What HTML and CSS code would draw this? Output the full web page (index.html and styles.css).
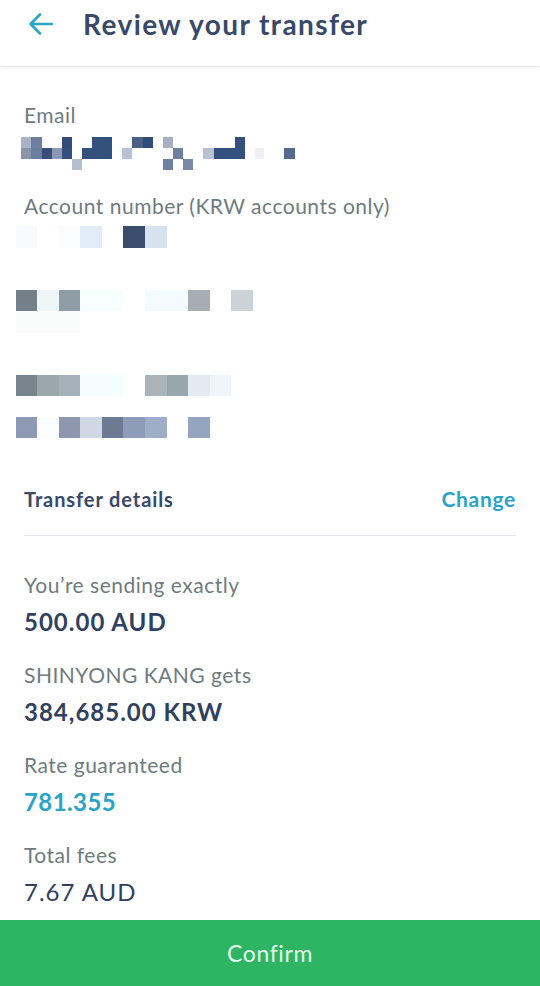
FILE: index.html
```html
<!DOCTYPE html>
<html lang="en">

<head>
    <meta charset="UTF-8">
    <meta name="viewport" content="width=device-width, initial-scale=1.0">
    <title>Review your transfer</title>
    <link rel="stylesheet" href="styles.css">
</head>

<body>
    <header class="topbar">
        <svg class="back" width="26" height="24" viewBox="0 0 26 24">
            <path d="M24 12 H3 M12 2.5 L2.5 12 L12 21.5" fill="none" stroke="#2aa5c9" stroke-width="2.6" stroke-linecap="round" stroke-linejoin="round" />
        </svg>
        <h1 class="title">Review your transfer</h1>
    </header>

    <main class="review">
        <section class="recipient">
            <p class="label">Email</p>
            <!-- blurred email -->
            <svg class="redacted redacted-email" width="300" height="33" viewBox="0 0 300 33">
                <rect x="21" y="0" width="10" height="11" fill="#a9b3c6" />
                <rect x="31" y="0" width="11" height="11" fill="#6f7fa0" />
                <rect x="62" y="0" width="10" height="11" fill="#344d7a" />
                <rect x="92" y="0" width="20" height="11" fill="#34507d" />
                <rect x="132" y="0" width="11" height="11" fill="#4a5f85" />
                <rect x="143" y="0" width="10" height="11" fill="#2f4b7a" />
                <rect x="163" y="0" width="10" height="11" fill="#a8b0c0" />
                <rect x="235" y="0" width="10" height="11" fill="#34507e" />

                <rect x="21" y="11" width="10" height="11" fill="#8893ac" />
                <rect x="31" y="11" width="11" height="11" fill="#6b7da0" />
                <rect x="42" y="11" width="10" height="11" fill="#3a4f78" />
                <rect x="52" y="11" width="10" height="11" fill="#8a98b5" />
                <rect x="62" y="11" width="10" height="11" fill="#34507e" />
                <rect x="82" y="11" width="30" height="11" fill="#34507d" />
                <rect x="122" y="11" width="10" height="11" fill="#b8c2d2" />
                <rect x="173" y="11" width="10" height="11" fill="#6d80a0" />
                <rect x="203" y="11" width="11" height="11" fill="#b7c1d2" />
                <rect x="214" y="11" width="31" height="11" fill="#34507e" />
                <rect x="255" y="11" width="9" height="11" fill="#eef0f5" />
                <rect x="284" y="11" width="11" height="11" fill="#55698f" />

                <rect x="72" y="22" width="10" height="11" fill="#b4bfd0" />
                <rect x="163" y="22" width="10" height="11" fill="#6f80a0" />
                <rect x="183" y="22" width="10" height="11" fill="#7a89a6" />
            </svg>

            <p class="label label-account">Account number (KRW accounts only)</p>
            <!-- blurred bank details -->
            <svg class="redacted redacted-account" width="300" height="212" viewBox="0 0 300 212">
                <rect x="16" y="0" width="21" height="22" fill="#f8fbfe" />
                <rect x="58" y="0" width="22" height="22" fill="#fafcfe" />
                <rect x="80" y="0" width="22" height="22" fill="#e2ebf8" />
                <rect x="123" y="0" width="22" height="22" fill="#3b4d6d" />
                <rect x="145" y="0" width="22" height="22" fill="#d8e1ee" />

                <rect x="16" y="64" width="21" height="21" fill="#748089" />
                <rect x="37" y="64" width="22" height="21" fill="#eef6fa" />
                <rect x="59" y="64" width="21" height="21" fill="#8f9ea6" />
                <rect x="80" y="64" width="43" height="21" fill="#f6feff" />
                <rect x="145" y="64" width="43" height="21" fill="#f4fbfd" />
                <rect x="188" y="64" width="22" height="21" fill="#a6adb3" />
                <rect x="231" y="64" width="22" height="21" fill="#ccd3d7" />
                <rect x="16" y="85" width="64" height="22" fill="#fafcfc" />

                <rect x="16" y="149" width="21" height="21" fill="#77848b" />
                <rect x="37" y="149" width="22" height="21" fill="#9ba7ad" />
                <rect x="59" y="149" width="21" height="21" fill="#a4b1b8" />
                <rect x="80" y="149" width="43" height="21" fill="#f5feff" />
                <rect x="145" y="149" width="22" height="21" fill="#aab4b9" />
                <rect x="167" y="149" width="21" height="21" fill="#98a6ad" />
                <rect x="188" y="149" width="22" height="21" fill="#e3eaf1" />
                <rect x="210" y="149" width="21" height="21" fill="#eff6fa" />

                <rect x="16" y="191" width="21" height="21" fill="#8d99b5" />
                <rect x="37" y="191" width="22" height="21" fill="#fcfdff" />
                <rect x="59" y="191" width="21" height="21" fill="#8d98ae" />
                <rect x="80" y="191" width="22" height="21" fill="#cfd8e4" />
                <rect x="102" y="191" width="21" height="21" fill="#6e7a91" />
                <rect x="123" y="191" width="22" height="21" fill="#8e9cba" />
                <rect x="145" y="191" width="22" height="21" fill="#9eaec8" />
                <rect x="188" y="191" width="22" height="21" fill="#95a4c1" />
            </svg>
        </section>

        <section class="details">
            <div class="details-head">
                <h2 class="details-title">Transfer details</h2>
                <a class="change" href="#">Change</a>
            </div>

            <dl class="summary">
                <dt class="label">You’re sending exactly</dt>
                <dd class="value">500.00 AUD</dd>

                <dt class="label">SHINYONG KANG gets</dt>
                <dd class="value">384,685.00 KRW</dd>

                <dt class="label">Rate guaranteed</dt>
                <dd class="value value-rate">781.355</dd>

                <dt class="label">Total fees</dt>
                <dd class="value value-plain">7.67 AUD</dd>
            </dl>
        </section>
    </main>

    <button class="confirm">Confirm</button>
</body>

</html>
```

FILE: styles.css
```css
* {
    margin: 0;
    padding: 0;
    box-sizing: border-box;
}

body {
    width: 540px;
    height: 986px;
    display: flex;
    flex-direction: column;
    overflow: hidden;
    background: #fff;
    font-family: Lato, "Noto Sans", sans-serif;
    color: #2f405e;
}

.topbar {
    height: 66px;
    display: flex;
    align-items: flex-start;
    padding: 6px 0 0 28px;
    background: #fff;
    box-shadow: 0 1px 3px rgba(0, 0, 0, 0.12);
    position: relative;
    z-index: 1;
}

.back {
    margin-top: 6px;
    flex: none;
}

.title {
    margin-left: 29px;
    font-size: 28px;
    line-height: 36px;
    font-weight: 700;
    color: #38496a;
    letter-spacing: 1.4px;
}

.review {
    flex: 1;
    padding: 37px 24px 0;
}

.label {
    display: block;
    font-size: 21px;
    line-height: 24px;
    color: #6e7b80;
    letter-spacing: 0.5px;
}

.redacted {
    display: block;
    margin-left: -24px;
}

.redacted-email {
    margin-top: 10px;
}

.label-account {
    margin-top: 24px;
}

.redacted-account {
    margin-top: 8px;
}

.details {
    margin-top: 49px;
}

.details-head {
    display: flex;
    justify-content: space-between;
    align-items: baseline;
    padding-bottom: 24px;
    border-bottom: 1px solid #e3e7e9;
}

.details-title {
    font-size: 20px;
    line-height: 24px;
    font-weight: 700;
    color: #38496a;
    letter-spacing: 0.9px;
}

.change {
    font-size: 21px;
    line-height: 24px;
    font-weight: 700;
    color: #2aa3c6;
    text-decoration: none;
    letter-spacing: 0.7px;
}

.summary {
    padding-top: 37px;
}

.value {
    margin: 11px 0 27px;
    font-size: 24px;
    line-height: 28px;
    font-weight: 700;
    color: #30415f;
    letter-spacing: 1px;
}

.value-rate {
    color: #2aa3c6;
    letter-spacing: 0.4px;
}

.value-plain {
    font-weight: 400;
    margin-bottom: 0;
}

.confirm {
    height: 66px;
    flex: none;
    border: none;
    background: #2db564;
    color: #e3fbec;
    font-family: Lato, "Noto Sans", sans-serif;
    font-size: 23px;
    letter-spacing: 0.6px;
}
```
